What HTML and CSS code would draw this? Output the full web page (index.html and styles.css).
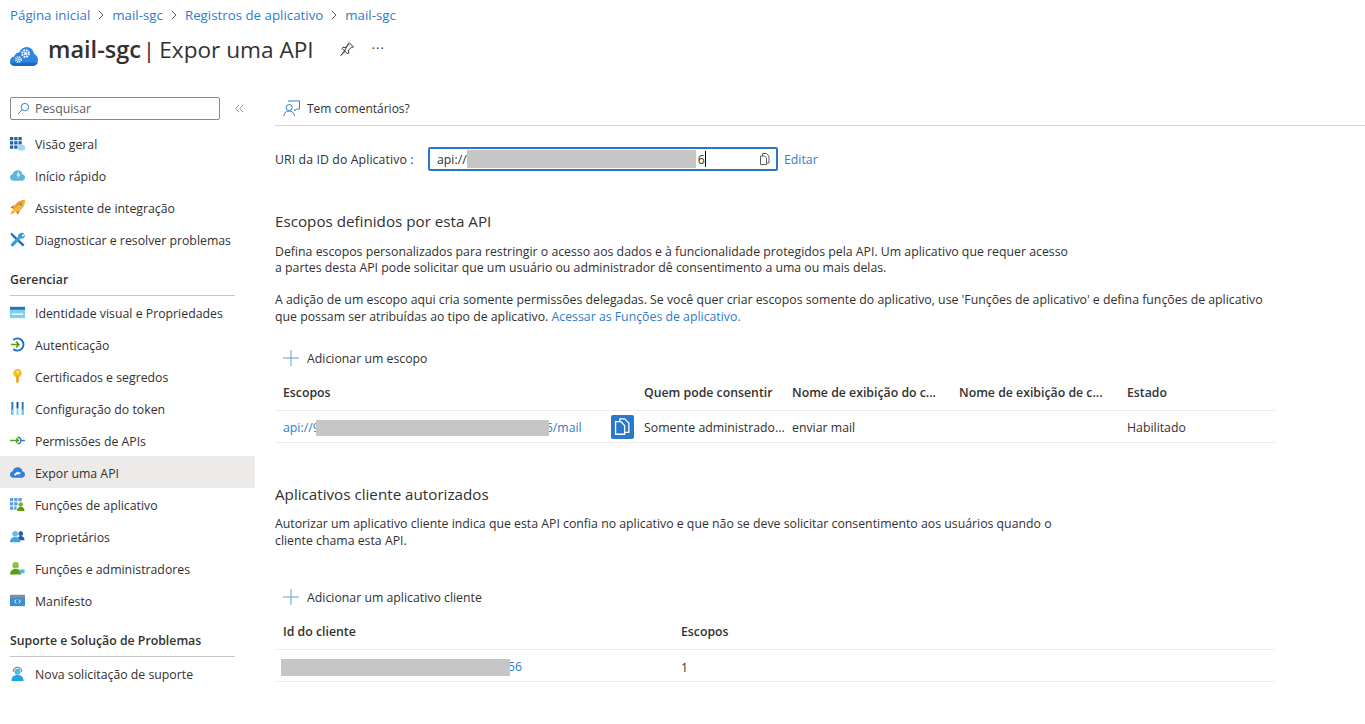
FILE: index.html

```html
<!DOCTYPE html>
<html lang="pt-BR">
<head>
    <meta charset="UTF-8">
    <title>mail-sgc | Expor uma API</title>
    <link rel="stylesheet" href="styles.css">
</head>
<body>
    <nav class="breadcrumb">
        <a href="#">Página inicial</a>
        <svg class="crumb-sep" viewBox="0 0 8 10"><path d="M2 1l4 4-4 4" /></svg>
        <a href="#">mail-sgc</a>
        <svg class="crumb-sep" viewBox="0 0 8 10"><path d="M2 1l4 4-4 4" /></svg>
        <a href="#">Registros de aplicativo</a>
        <svg class="crumb-sep" viewBox="0 0 8 10"><path d="M2 1l4 4-4 4" /></svg>
        <a href="#">mail-sgc</a>
    </nav>

    <header class="page-title">
        <svg class="title-icon" viewBox="0 0 28 19">
            <path d="M5 19C2.200 19 0 16.800 0 14.200c0-2.500 1.800-4.500 4.300-4.800C5 7.200 7 5.500 9.300 5.300 10.500 2.200 13.300 0 16.500 0c4 0 7.200 3 7.500 7 2.400.8 4 3 4 5.700 0 3.500-2.700 6.300-6 6.300z" fill="#2f86e0" />
            <path d="M5 19c-2.400 0-4.400-1.500-4.900-3.500h27.800c-.6 2-3 3.500-5.900 3.500z" fill="#1f68c0" />
            <circle cx="8.500" cy="12.500" r="2.600" fill="none" stroke="#d4e8fa" stroke-width="1.700" stroke-dasharray="1.400 .7" />
            <circle cx="8.500" cy="12.500" r="1.200" fill="#d4e8fa" />
            <circle cx="15.500" cy="6.500" r="3.300" fill="none" stroke="#fff" stroke-width="2" stroke-dasharray="1.700 .9" />
            <circle cx="15.500" cy="6.500" r="1.600" fill="#fff" />
        </svg>
        <h1><b>mail-sgc</b><span class="title-sep">|</span><span class="title-sub">Expor uma API</span></h1>
        <svg class="pin-icon" viewBox="0 0 16 16"><path d="M10 1.500l4.500 4.500-1 .6-1-.4-3 3 .2 2.800-1 1L5.500 9.800 1.800 14.500l4.700-4.700M5.500 9.800L3 7.300l1-1 2.800.2 3-3-.4-1z" /></svg>
        <span class="more">···</span>
    </header>

    <div class="layout">
        <aside class="sidebar">
            <div class="search-row">
                <div class="search-box">
                    <svg class="search-icon" viewBox="0 0 14 14"><circle cx="8.500" cy="5.500" r="4" /><path d="M5.500 8.500L1 13" /></svg>
                    <span>Pesquisar</span>
                </div>
                <svg class="collapse-icon" viewBox="0 0 10 10"><path d="M4.500 1L.8 5l3.700 4M9 1L5.300 5 9 9" /></svg>
            </div>

            <a class="nav-item" href="#">
                <svg viewBox="0 0 16 16"><path d="M0 1h3.500v3.500H0zM4.500 1H8v3.500H4.500zM9 1h3.500v3.500H9zM0 5.500h3.500V9H0zM4.500 5.500H8V9H4.500zM9 5.500h3.500V9H9zM0 10h3.500v3.500H0zM4.500 10H8v3.500H4.500z" fill="#2460a8" /><path d="M8 10.500l4-2 4 2v4l-4 1.500-4-1.500z" fill="#a5d8f0" /></svg>
                Visão geral
            </a>
            <a class="nav-item" href="#">
                <svg viewBox="0 0 16 16"><path d="M4 13.500C1.500 13.500 0 12 0 10c0-1.800 1.300-3.200 3-3.400C3.500 4 5.500 2.500 8.500 2.500c2.500 0 4.500 2 4.700 4.200 1.600.3 2.800 1.600 2.800 3.300 0 2-1.500 3.500-3.500 3.500z" fill="#5fb4dc" /><path d="M9.500 3L7 8h2l-1.500 3.500L11 7H9z" fill="#fff" /></svg>
                Início rápido
            </a>
            <a class="nav-item" href="#">
                <svg viewBox="0 0 16 16"><path d="M16 0C10.500 0 6.500 2.500 4 7.500L3.500 10l2.500 2.500 2.500-.5C13.500 9.500 16 5.500 16 0z" fill="#f29a2e" /><path d="M16 0L3.500 10l2.500 2.500 2.500-.5C13.500 9.500 16 5.500 16 0z" fill="#f7b733" /><path d="M4.500 5L.5 8l3 1.500zM11 11.500l-3 4-1.500-3z" fill="#e8641e" /><path d="M3 10.500L0 16l5.500-3z" fill="#f6a623" /><circle cx="11.500" cy="4.500" r="1.400" fill="#3f9bdc" /></svg>
                Assistente de integração
            </a>
            <a class="nav-item" href="#">
                <svg viewBox="0 0 16 16"><path d="M1.500.5l3.500 3.200 10.500 10-1.800 1.800L3.200 5.500.5 2.500z" fill="#1f6fb8" /><path d="M15.500 1.500l-3 2.500 1 1 2.500-2.200c.3 2.500-1.800 5-4.700 4.200L3.500 15.500 1 15v-2.500l7.500-6.800C8 2 11.500-.5 15.500 1.500z" fill="#3aa0d8" /></svg>
                Diagnosticar e resolver problemas
            </a>

            <div class="nav-group">Gerenciar</div>

            <a class="nav-item" href="#">
                <svg viewBox="0 0 16 16"><path d="M0 2h16v12H0z" fill="#7cd0ee" /><path d="M0 2h16v3H0z" fill="#1f75b8" /><path d="M2 9h12v1.500H2z" fill="#fff" /></svg>
                Identidade visual e Propriedades
            </a>
            <a class="nav-item" href="#">
                <svg viewBox="0 0 16 16"><path d="M3.500 3.200A6.500 6.500 0 1 1 3.500 12.800" fill="none" stroke="#1f6fc4" stroke-width="2" /><path d="M1 8h8M6.500 5l3 3-3 3" fill="none" stroke="#5aa010" stroke-width="1.800" /></svg>
                Autenticação
            </a>
            <a class="nav-item" href="#">
                <svg viewBox="0 0 16 16"><circle cx="8" cy="4.500" r="4.500" fill="#f5c02c" /><path d="M6.500 7h3v6L8 15.500 6.500 14z" fill="#e8a81c" /><circle cx="8" cy="3" r="1" fill="#fff" /></svg>
                Certificados e segredos
            </a>
            <a class="nav-item" href="#">
                <svg viewBox="0 0 16 16"><path d="M1.500 1h2v14h-2zM12.500 1h2v14h-2z" fill="#1f75c8" /><path d="M7 1h2v7H7z" fill="#1a4f8c" /><path d="M7 8h2v7H7zM1.500 9h2v6h-2zM12.500 9h2v6h-2z" fill="#7cd4f0" /></svg>
                Configuração do token
            </a>
            <a class="nav-item" href="#">
                <svg viewBox="0 0 16 16"><path d="M8 4.500a3.500 3.500 0 1 1 0 7" fill="none" stroke="#2a7ac8" stroke-width="1.500" /><path d="M11.500 8H16" stroke="#2a7ac8" stroke-width="1.500" /><path d="M0 8h9M6.500 5.500L9 8l-2.500 2.500" fill="none" stroke="#5aa010" stroke-width="1.500" /></svg>
                Permissões de APIs
            </a>
            <a class="nav-item active" href="#">
                <svg viewBox="0 0 16 16"><path d="M3.500 13.500C1.500 13.500 0 12 0 10c0-1.800 1.300-3.200 3-3.400C3.500 4 5.500 2.500 8.500 2.500c2.500 0 4.500 2 4.700 4.200 1.600.3 2.800 1.600 2.800 3.300 0 2-1.500 3.500-3.500 3.500z" fill="#2f80dc" /><path d="M4 10l4-3 1.500 1.500-4 3zM8 9.500l2.500-2 1 1-2.500 2z" fill="#fff" /></svg>
                Expor uma API
            </a>
            <a class="nav-item" href="#">
                <svg viewBox="0 0 16 16"><path d="M0 1h3.500v3.500H0zM4.500 1H8v3.500H4.500zM9 1h3.500v3.500H9zM0 5.500h3.500V9H0zM4.500 5.500H8V9H4.500zM0 10h3.500v3.500H0zM4.500 10H7v3.500H4.500z" fill="#5a9de0" /><circle cx="11.500" cy="8" r="2.500" fill="#7ab828" /><path d="M7.500 15c0-3 1.800-4.500 4-4.500s4 1.500 4 4.500z" fill="#5a9a14" /></svg>
                Funções de aplicativo
            </a>
            <a class="nav-item" href="#">
                <svg viewBox="0 0 16 16"><circle cx="11.500" cy="5" r="2.500" fill="#1f5fa8" /><path d="M8 12c0-3 1.500-4.500 3.500-4.500S15.500 9 15.500 12z" fill="#1f5fa8" /><circle cx="5.500" cy="5" r="3" fill="#5cc0ea" /><path d="M0 14c0-4 2.500-5.500 5.500-5.500S11 10 11 14z" fill="#3ca8dc" /></svg>
                Proprietários
            </a>
            <a class="nav-item" href="#">
                <svg viewBox="0 0 16 16"><circle cx="6" cy="4.500" r="3.500" fill="#8cc63e" /><path d="M0 14.500c0-4 2.500-6 6-6s6 2 6 6z" fill="#5a9a14" /><path d="M10 9h5.500v4H10z" fill="#52b8e4" /></svg>
                Funções e administradores
            </a>
            <a class="nav-item" href="#">
                <svg viewBox="0 0 16 16"><path d="M0 2h16v12H0z" fill="#3f8fd0" /><path d="M0 2h16v3H0z" fill="#8a8f94" /><path d="M6.500 7L5 9l1.500 2M9.500 7L11 9l-1.500 2" fill="none" stroke="#fff" /></svg>
                Manifesto
            </a>

            <div class="nav-group">Suporte e Solução de Problemas</div>

            <a class="nav-item" href="#">
                <svg viewBox="0 0 16 16"><path d="M3.500 6a4.500 4.500 0 0 1 9 0" fill="none" stroke="#7f8a94" stroke-width="1.500" /><circle cx="8" cy="6" r="3.200" fill="#3cc0ea" /><path d="M1.500 16c0-5 3-6.500 6.500-6.500s6.500 1.500 6.500 6.500z" fill="#22a4dc" /></svg>
                Nova solicitação de suporte
            </a>
        </aside>

        <main class="content">
            <div class="toolbar">
                <svg class="feedback-icon" viewBox="0 0 18 18"><circle cx="6.500" cy="8" r="3.200" /><path d="M.8 17c.3-3.300 2.700-5.400 5.700-5.400s5.400 2.100 5.700 5.400M6 2V1h11.500v8.500h-3l-2 2V9.500" /></svg>
                Tem comentários?
            </div>

            <div class="uri-row">
                <label>URI da ID do Aplicativo :</label>
                <div class="uri-input">
                    <span class="uri-value">api://<span class="redact redact-uri"></span><span class="uri-end">6</span><i class="caret"></i></span>
                    <svg class="copy-icon" viewBox="0 0 12 12"><path d="M3.500 3V.5h4l2.500 2.500v7H7.500M1.500 3h4l2 2v6.500h-6z" /></svg>
                </div>
                <a href="#">Editar</a>
            </div>

            <h2 class="section-title first">Escopos definidos por esta API</h2>
            <p class="text tight">Defina escopos personalizados para restringir o acesso aos dados e à funcionalidade protegidos pela API. Um aplicativo que requer acesso<br>a partes desta API pode solicitar que um usuário ou administrador dê consentimento a uma ou mais delas.</p>
            <p class="text gap">A adição de um escopo aqui cria somente permissões delegadas. Se você quer criar escopos somente do aplicativo, use 'Funções de aplicativo' e defina funções de aplicativo<br>que possam ser atribuídas ao tipo de aplicativo. <a href="#">Acessar as Funções de aplicativo.</a></p>

            <button class="add-button scope-add">
                <svg viewBox="0 0 16 16"><path d="M8 0v16M0 8h16" /></svg>
                Adicionar um escopo
            </button>

            <div class="grid scope-grid grid-head">
                <div>Escopos</div>
                <div></div>
                <div>Quem pode consentir</div>
                <div>Nome de exibição do c...</div>
                <div>Nome de exibição de c...</div>
                <div>Estado</div>
            </div>
            <div class="grid scope-grid grid-row">
                <div><a class="scope-link" href="#">api://9<span class="redact redact-scope"></span><span class="cut">6/mail</span></a></div>
                <div>
                    <span class="copy-button">
                        <svg viewBox="0 0 16 16"><path d="M5.500 3.500V.8h4.500l4 4v8.700h-3.500M1.500 3.500h5l3.500 3.500v8.300H1.500z" /></svg>
                    </span>
                </div>
                <div>Somente administrado...</div>
                <div>enviar mail</div>
                <div></div>
                <div>Habilitado</div>
            </div>

            <h2 class="section-title second">Aplicativos cliente autorizados</h2>
            <p class="text">Autorizar um aplicativo cliente indica que esta API confia no aplicativo e que não se deve solicitar consentimento aos usuários quando o<br>cliente chama esta API.</p>

            <button class="add-button client-add">
                <svg viewBox="0 0 16 16"><path d="M8 0v16M0 8h16" /></svg>
                Adicionar um aplicativo cliente
            </button>

            <div class="grid client-grid grid-head">
                <div>Id do cliente</div>
                <div>Escopos</div>
            </div>
            <div class="grid client-grid grid-row client-row">
                <div class="client-id"><span class="redact redact-client"></span><a class="cut-small" href="#">56</a></div>
                <div>1</div>
            </div>
        </main>
    </div>
</body>
</html>
```

FILE: styles.css

```css
* {
    box-sizing: border-box;
}

body {
    margin: 0;
    height: 724px;
    overflow: hidden;
    background-color: #fff;
    color: #323130;
    font-family: "Open Sans", "Noto Sans", sans-serif;
    font-size: 12.3px;
}

a {
    color: #2f7ccc;
    text-decoration: none;
}

/* breadcrumb + title */
.breadcrumb {
    display: flex;
    align-items: center;
    gap: 7px;
    height: 30px;
    padding-left: 10px;
    font-size: 13.3px;
}
.crumb-sep {
    width: 8px;
    height: 10px;
    fill: none;
    stroke: #605e5c;
}
.page-title {
    display: flex;
    align-items: center;
    height: 38px;
    padding-left: 10px;
}
.title-icon {
    flex: none;
    width: 28px;
    height: 19px;
    margin-top: 14px;
}
h1 {
    display: flex;
    align-items: center;
    margin: 0 0 0 10px;
    font-size: 22.6px;
    font-weight: 400;
    white-space: nowrap;
}
h1 b {
    font-size: 23.5px;
    font-weight: 600;
}
.title-sep {
    margin: 0 4px 0 2px;
}
.pin-icon {
    width: 16px;
    height: 16px;
    margin-left: 25px;
    fill: none;
    stroke: #323130;
}
.more {
    margin-left: 17px;
    margin-top: -3px;
    font-size: 13px;
    letter-spacing: 1px;
}

.layout {
    display: flex;
    margin-top: 28px;
}

/* left menu */
.sidebar {
    flex: none;
    width: 255px;
}
.search-row {
    display: flex;
    align-items: center;
    height: 24px;
    margin-bottom: 7px;
    padding-left: 10px;
}
.search-box {
    display: flex;
    align-items: center;
    gap: 5px;
    width: 210px;
    height: 23px;
    padding-left: 6px;
    border: 1px solid #8a8886;
    border-radius: 2px;
    color: #605e5c;
}
.search-icon {
    width: 13px;
    height: 13px;
    fill: none;
    stroke: #2b78c8;
}
.collapse-icon {
    width: 9px;
    height: 9px;
    margin-left: 15px;
    fill: none;
    stroke: #8a8886;
}
.nav-item {
    display: flex;
    align-items: center;
    gap: 10px;
    height: 32px;
    padding: 2px 0 0 10px;
    color: #323130;
}
.nav-item svg {
    flex: none;
    width: 15px;
    height: 15px;
    margin-top: -2px;
}
.nav-item.active {
    background-color: #edebe9;
}
.nav-group {
    display: flex;
    align-items: center;
    height: 39px;
    margin: 2px 20px 0 10px;
    padding-top: 7px;
    border-bottom: 1px solid #c8c6c4;
    font-weight: 600;
}

/* main panel */
.content {
    flex: 1;
    padding-left: 20px;
}
.toolbar {
    display: flex;
    align-items: center;
    gap: 7px;
    height: 35px;
    margin-top: -5px;
    padding-left: 8px;
    border-bottom: 1px solid #d6d5d3;
    font-size: 12px;
}
.feedback-icon {
    width: 17px;
    height: 17px;
    fill: none;
    stroke: #2b78c8;
}
.uri-row {
    display: flex;
    align-items: center;
    margin-top: 21px;
}
.uri-row label {
    width: 153px;
    letter-spacing: .1px;
}
.uri-input {
    display: flex;
    align-items: center;
    justify-content: space-between;
    width: 350px;
    height: 24px;
    margin-right: 6px;
    padding: 0 5px 0 7px;
    border: 2px solid #2b78c8;
    border-radius: 2px;
}
.uri-value {
    display: flex;
    align-items: center;
}
.uri-end {
    margin-left: 2px;
}
.copy-icon {
    width: 12px;
    height: 12px;
    fill: none;
    stroke: #605e5c;
}
.caret {
    width: 1px;
    height: 16px;
    background-color: #000;
}
/* grey boxes sit over the ids, they cut the first and last characters */
.redact {
    display: inline-block;
    position: relative;
    background-color: #c6c6c6;
}
.redact-uri {
    width: 229px;
    height: 18px;
}
.cut {
    margin-left: -3px;
}
.cut-small {
    margin-left: -2px;
}
.section-title {
    margin: 0;
    font-size: 15.2px;
    font-weight: 400;
    line-height: 20px;
}
.section-title.first {
    margin-top: 40px;
    margin-bottom: 13px;
}
.section-title.second {
    margin-top: 41px;
    margin-bottom: 12px;
}
.text {
    margin: 0;
    line-height: 16.5px;
    white-space: nowrap;
}
.text.tight {
    line-height: 16px;
}
.text.gap {
    margin-top: 16px;
}
.add-button {
    display: flex;
    align-items: center;
    gap: 8px;
    padding: 0 0 0 8px;
    border: none;
    background: none;
    color: #323130;
    font: inherit;
    height: 32px;
}
.add-button svg {
    width: 16px;
    height: 16px;
    fill: none;
    stroke: #5a9fe0;
}
.scope-add {
    margin-top: 17px;
}
.client-add {
    margin-top: 32px;
}

/* tables */
.grid {
    display: grid;
    align-items: center;
    width: 1000px;
    padding-left: 8px;
    border-bottom: 1px solid #edebe9;
}
.grid > div {
    white-space: nowrap;
}
.scope-grid {
    grid-template-columns: 328px 33px 148px 167px 168px 1fr;
}
.client-grid {
    grid-template-columns: 398px 1fr;
}
.grid-head {
    height: 37px;
    font-weight: 600;
}
.grid-row {
    height: 32px;
    padding-top: 1px;
}
.client-row {
    padding-top: 3px;
}
.redact-scope {
    width: 233px;
    height: 16px;
    margin-left: -4px;
    vertical-align: -4px;
}
.redact-client {
    width: 229px;
    height: 17px;
    vertical-align: -5px;
}
.client-id {
    margin-left: -2px;
}
.copy-button {
    display: flex;
    align-items: center;
    justify-content: center;
    width: 23px;
    height: 24px;
    margin-top: -1px;
    border-radius: 2px;
    background-color: #2b78c8;
}
.copy-button svg {
    width: 17px;
    height: 17px;
    fill: none;
    stroke: #fff;
    stroke-width: 1.200;
}
```
